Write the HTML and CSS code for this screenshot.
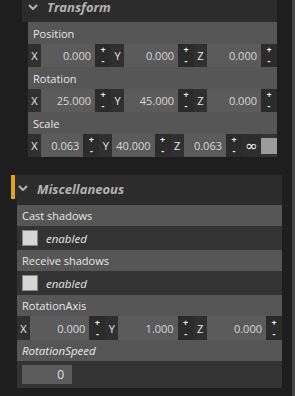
FILE: index.html
```html
<!DOCTYPE html>
<html>
<head>
<meta charset="utf-8">
<link rel="stylesheet" href="styles.css">
</head>
<body>
<div class="app">
  <div class="main">
    <section class="sec sec-transform">
      <div class="hdr">
        <svg class="chev" width="10" height="6" viewBox="0 0 10 6"><polyline points="1,1 5,5 9,1" fill="none" stroke="#b3b3b3" stroke-width="2"/></svg>
        <span class="title">Transform</span>
      </div>
      <div class="body">
        <div class="lbl">Position</div>
        <div class="vec">
          <div class="grp"><span class="axis">X</span><span class="num">0.000</span><span class="pm"><i>+</i><i>-</i></span></div>
          <div class="grp"><span class="axis">Y</span><span class="num">0.000</span><span class="pm"><i>+</i><i>-</i></span></div>
          <div class="grp"><span class="axis">Z</span><span class="num">0.000</span><span class="pm"><i>+</i><i>-</i></span></div>
        </div>
        <div class="lbl">Rotation</div>
        <div class="vec">
          <div class="grp"><span class="axis">X</span><span class="num">25.000</span><span class="pm"><i>+</i><i>-</i></span></div>
          <div class="grp"><span class="axis">Y</span><span class="num">45.000</span><span class="pm"><i>+</i><i>-</i></span></div>
          <div class="grp"><span class="axis">Z</span><span class="num">0.000</span><span class="pm"><i>+</i><i>-</i></span></div>
        </div>
        <div class="lbl">Scale</div>
        <div class="vec">
          <div class="grp"><span class="axis">X</span><span class="num">0.063</span><span class="pm"><i>+</i><i>-</i></span></div>
          <div class="grp"><span class="axis">Y</span><span class="num">40.000</span><span class="pm"><i>+</i><i>-</i></span></div>
          <div class="grp"><span class="axis">Z</span><span class="num">0.063</span><span class="pm"><i>+</i><i>-</i></span></div>
          <span class="inf">∞</span>
          <span class="swcell"><span class="swatch"></span></span>
        </div>
      </div>
    </section>

    <section class="sec sec-misc">
      <div class="hdr-wrap">
        <span class="bar"></span>
        <div class="hdr">
          <svg class="chev" width="10" height="6" viewBox="0 0 10 6"><polyline points="1,1 5,5 9,1" fill="none" stroke="#b3b3b3" stroke-width="2"/></svg>
          <span class="title">Miscellaneous</span>
        </div>
      </div>
      <div class="body">
        <div class="pad"></div>
        <div class="lbl">Cast shadows</div>
        <div class="chk"><span class="box"></span><span class="en">enabled</span></div>
        <div class="lbl">Receive shadows</div>
        <div class="chk"><span class="box"></span><span class="en">enabled</span></div>
        <div class="lbl">RotationAxis</div>
        <div class="vec">
          <div class="grp"><span class="axis">X</span><span class="num">0.000</span><span class="pm"><i>+</i><i>-</i></span></div>
          <div class="grp"><span class="axis">Y</span><span class="num">1.000</span><span class="pm"><i>+</i><i>-</i></span></div>
          <div class="grp"><span class="axis">Z</span><span class="num">0.000</span><span class="pm"><i>+</i><i>-</i></span></div>
        </div>
        <div class="lbl lbl-it">RotationSpeed</div>
        <div class="numrow"><span class="numbox">0</span></div>
      </div>
    </section>
  </div>
  <div class="scroll"></div>
</div>
</body>
</html>
```

FILE: styles.css
```css
html, body {
  margin: 0;
  padding: 0;
}
body {
  background: #1e1e1e;
  font-family: "Open Sans", "Noto Sans", sans-serif;
  color: #e6e6e6;
  height: 396px;
  overflow: hidden;
}
.app {
  display: flex;
  height: 396px;
}
.main {
  flex: 1;
  min-width: 0;
}
.scroll {
  width: 3px;
  background: #464646;
}

.sec-transform {
  margin: 0 15px 0 22px;
}
.sec-misc {
  margin: 18px 10px 0 11px;
}

.hdr {
  display: flex;
  align-items: flex-start;
  background: #2c2c2c;
  box-sizing: border-box;
}
.chev {
  display: block;
  margin-top: 4px;
  flex: none;
}
.title {
  margin-left: 9px;
  font-size: 13px;
  line-height: 14px;
  font-weight: 700;
  font-style: italic;
  color: #b3b3b3;
}
.sec-transform .hdr {
  height: 22px;
  padding-left: 6px;
}

.hdr-wrap {
  display: flex;
}
.bar {
  width: 4px;
  height: 24px;
  background: #e2a21f;
  flex: none;
}
.sec-misc .hdr {
  flex: 1;
  height: 24px;
  padding: 7px 0 0 3px;
}
.sec-misc .chev {
  margin-top: 3px;
}

.body {
  margin-left: 6px;
}
.pad {
  height: 6px;
  background: #2c2c2c;
}

.lbl {
  height: 22px;
  background: #565656;
  padding-left: 5px;
  display: flex;
  align-items: center;
  font-size: 11px;
  color: #e8e8e8;
}
.sec-misc .lbl {
  height: 21px;
}
.lbl-it {
  font-style: italic;
  font-size: 11.5px;
}

.vec {
  display: flex;
  height: 23px;
  background: #333;
}
.sec-misc .vec {
  height: 24px;
}
.grp {
  flex: 1;
  display: flex;
  min-width: 0;
}
.axis {
  width: 13px;
  flex: none;
  background: #303030;
  display: flex;
  align-items: center;
  justify-content: center;
  font-size: 11px;
  color: #e8e8e8;
}
.num {
  flex: 1;
  min-width: 0;
  background: #5b5b5b;
  padding-right: 4px;
  display: flex;
  align-items: center;
  justify-content: flex-end;
  font-size: 11px;
  color: #d8d8d8;
}
.pm {
  width: 16px;
  flex: none;
  background: #2b2b2b;
  display: flex;
  flex-direction: column;
  align-items: center;
  justify-content: center;
  gap: 1px;
  font-size: 9px;
  line-height: 10px;
  color: #f0f0f0;
}
.pm i {
  display: block;
  font-style: normal;
  font-weight: 700;
}
.inf {
  width: 19px;
  flex: none;
  background: #2d2d2d;
  display: flex;
  align-items: center;
  justify-content: center;
  font-family: "DejaVu Sans", sans-serif;
  font-size: 15px;
  color: #f0f0f0;
}
.swcell {
  width: 16px;
  flex: none;
  display: flex;
  align-items: center;
}
.swatch {
  width: 16px;
  height: 16px;
  background: #9c9c9c;
}

.chk {
  height: 24px;
  background: #333;
  display: flex;
  align-items: center;
  padding-left: 5px;
}
.box {
  width: 14px;
  height: 14px;
  border: 1px solid #8a8a8a;
  background: #d5d5d5;
}
.en {
  margin-left: 8px;
  font-style: italic;
  font-size: 11.5px;
  color: #e6e6e6;
}

.numrow {
  height: 27px;
  background: #333;
  padding-left: 5px;
  display: flex;
  align-items: center;
}
.numbox {
  width: 50px;
  height: 19px;
  box-sizing: border-box;
  background: #5c5c5c;
  padding-right: 8px;
  display: flex;
  align-items: center;
  justify-content: flex-end;
  font-size: 12px;
  color: #e6e6e6;
}
```
